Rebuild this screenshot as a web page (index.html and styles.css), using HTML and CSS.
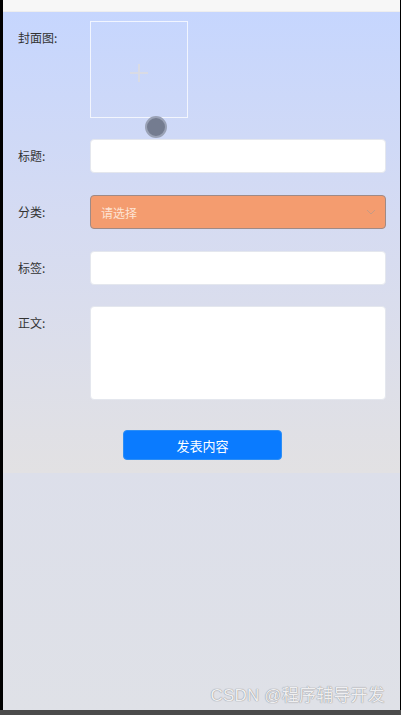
FILE: index.html
```html
<!DOCTYPE html>
<html lang="zh">
<head>
<meta charset="utf-8">
<title>发表内容</title>
<link rel="stylesheet" href="styles.css">
</head>
<body>
<div class="frame">
  <div class="topbar"></div>
  <form class="form">
    <div class="row row-top">
      <label class="label">封面图:</label>
      <div class="upload">
        <svg class="plus" width="18" height="18" viewBox="0 0 18 18"><path d="M9 0 V18 M0 9 H18" stroke="#d9dbe5" stroke-width="2"/></svg>
        <span class="dot"></span>
      </div>
    </div>
    <div class="row">
      <label class="label">标题:</label>
      <div class="input"></div>
    </div>
    <div class="row">
      <label class="label">分类:</label>
      <div class="select">
        <span class="placeholder">请选择</span>
        <svg class="chev" width="10" height="6" viewBox="0 0 10 6"><path d="M1 1 L5 5 L9 1" fill="none" stroke="#c79a84" stroke-width="1"/></svg>
      </div>
    </div>
    <div class="row row-tag">
      <label class="label">标签:</label>
      <div class="input"></div>
    </div>
    <div class="row row-top">
      <label class="label">正文:</label>
      <div class="textarea"></div>
    </div>
    <div class="actions">
      <button type="button" class="submit">发表内容</button>
    </div>
  </form>
  <div class="rest"></div>
  <div class="watermark">CSDN @程序辅导开发</div>
</div>
<div class="bottombar"></div>
</body>
</html>
```

FILE: styles.css
```css
html, body {
  margin: 0;
  padding: 0;
  height: 715px;
  overflow: hidden;
}
body {
  font-family: "Noto Sans CJK SC", "Noto Sans", sans-serif;
  font-size: 12px;
  color: #333;
  background: #000;
}
.frame {
  position: relative;
  height: 710px;
  margin-left: 3px;
  margin-right: 1px;
  display: flex;
  flex-direction: column;
  background: linear-gradient(#d7dbf0, #dfe1e7);
}
.topbar {
  height: 12px;
  background: #f7f7f7;
  border-bottom: 1px solid #eeeeee;
  box-sizing: border-box;
}
.form {
  margin: 0;
  height: 461px;
  box-sizing: border-box;
  padding: 9px 14px 0 15px;
  background: linear-gradient(#c6d6fe 0%, #d5dbf2 45%, #e2e1e3 100%);
}
.row {
  display: flex;
  align-items: center;
  margin-bottom: 22px;
}
.row-top {
  align-items: flex-start;
}
.row:first-child {
  margin-bottom: 21px;
}
.row-tag {
  margin-bottom: 21px;
}
.label {
  width: 72px;
  flex: none;
  line-height: 34px;
  font-size: 12px;
  color: #333;
}
.upload {
  position: relative;
  width: 98px;
  height: 97px;
  box-sizing: border-box;
  border: 1px solid rgba(255, 255, 255, 0.75);
  display: flex;
  align-items: center;
  justify-content: center;
}
.plus {
  display: block;
  margin-top: 6px;
  margin-left: -1px;
}
.dot {
  position: absolute;
  left: 54px;
  top: 94px;
  width: 22px;
  height: 22px;
  border-radius: 50%;
  background: #747c90;
  box-sizing: border-box;
  border: 2px solid #9aa2b6;
}
.input, .select {
  flex: 1;
  height: 34px;
  box-sizing: border-box;
  background: #fff;
  border: 1px solid #e4e7ee;
  border-radius: 4px;
}
.select {
  height: 34px;
  background: #f49c6f;
  border: 1px solid #a08a86;
  display: flex;
  align-items: center;
  justify-content: space-between;
  padding: 0 9px 0 10px;
}
.placeholder {
  color: #fde4d5;
  font-size: 12px;
}
.textarea {
  flex: 1;
  height: 94px;
  box-sizing: border-box;
  background: #fff;
  border: 1px solid #e4e7ee;
  border-radius: 4px;
}
.actions {
  display: flex;
  justify-content: center;
  padding-top: 8px;
  padding-left: 1px;
}
.submit {
  width: 159px;
  height: 30px;
  border: 1px solid #2d8ef5;
  border-radius: 4px;
  background: #0a7bff;
  color: #fff;
  font-family: "Noto Sans CJK SC", sans-serif;
  font-size: 13px;
  padding: 0;
}
.rest {
  flex: 1;
}
.watermark {
  position: absolute;
  right: 15px;
  bottom: 4px;
  font-family: "Liberation Sans", "Noto Sans CJK SC", sans-serif;
  font-size: 17px;
  color: #efeff1;
  text-shadow: 0 0 1px #8c8c90, 0 0 1px #a0a0a4;
  letter-spacing: 0.2px;
}
.bottombar {
  height: 5px;
  background: #4b4b4b;
}
```
